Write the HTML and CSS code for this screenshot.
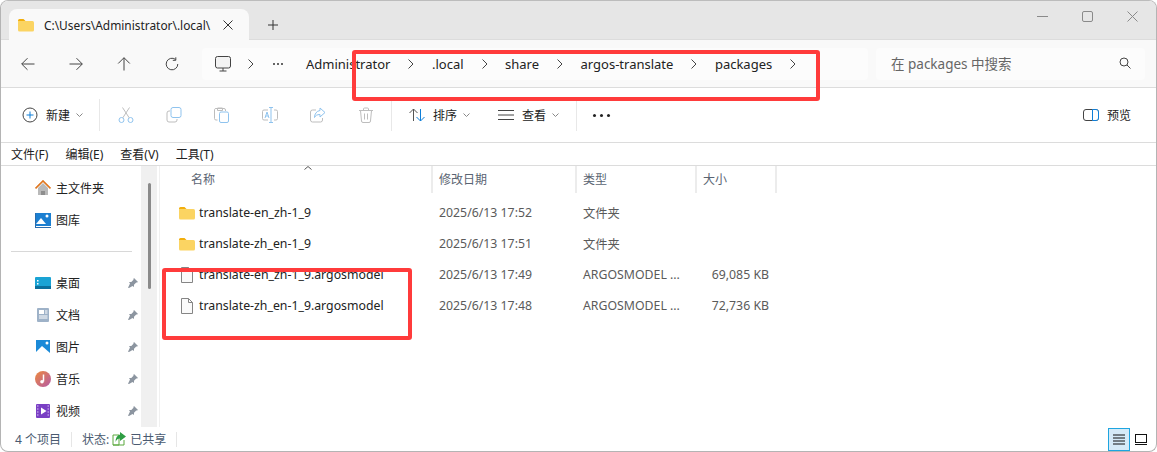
FILE: index.html
```html
<!DOCTYPE html>
<html lang="zh">
<head>
<meta charset="utf-8">
<title>packages</title>
<link rel="stylesheet" href="styles.css">
</head>
<body>
<div class="window">
  <header class="tabbar">
    <div class="tab">
      <svg class="ic16" viewBox="0 0 16 16"><path d="M0 3.500a1.500 1.500 0 0 1 1.500-1.500h4l2 2H0z" fill="#f2ae0c"/><path d="M0 4h14.500a1.500 1.500 0 0 1 1.500 1.500V13a1.500 1.500 0 0 1-1.500 1.500h-13A1.500 1.500 0 0 1 0 13z" fill="#fbd462"/></svg>
      <span class="tab-title">C:\Users\Administrator\.local\</span>
      <svg class="tab-close" viewBox="0 0 10 10"><path d="M.5.5l9 9M9.500.500l-9 9" stroke="#333" fill="none"/></svg>
    </div>
    <svg class="tab-new" viewBox="0 0 10 10"><path d="M5 0v10M0 5h10" stroke="#333" fill="none"/></svg>
    <div class="winctl">
      <svg class="ctl" viewBox="0 0 11 11"><path d="M0 5.500h11" stroke="#8a8a8a" fill="none"/></svg>
      <svg class="ctl" viewBox="0 0 11 11"><rect x=".5" y=".5" width="10" height="10" rx="1.500" stroke="#8a8a8a" fill="none"/></svg>
      <svg class="ctl" viewBox="0 0 11 11"><path d="M.5.5l10 10M10.500.500l-10 10" stroke="#8a8a8a" fill="none"/></svg>
    </div>
  </header>

  <nav class="navbar">
    <div class="navbtns">
      <span class="navbtn"><svg class="ic14" viewBox="0 0 14 14"><path d="M13.500 7H.8M6.500 1.200L.7 7l5.800 5.800" stroke="#444" fill="none"/></svg></span>
      <span class="navbtn"><svg class="ic14" viewBox="0 0 14 14"><path d="M.5 7h12.700M7.500 1.200L13.300 7l-5.800 5.800" stroke="#444" fill="none"/></svg></span>
      <span class="navbtn"><svg class="ic14" viewBox="0 0 14 14"><path d="M7 13.500V.8M1.200 6.500L7 .7l5.800 5.800" stroke="#444" fill="none"/></svg></span>
      <span class="navbtn"><svg class="ic14" viewBox="0 0 14 14"><path d="M12.800 7A5.800 5.800 0 1 1 10.500 2.400M10.800.3v3h-3" stroke="#444" fill="none"/></svg></span>
    </div>
    <div class="address">
      <svg class="pc" viewBox="0 0 16 16"><rect x=".5" y=".5" width="15" height="11.500" rx="2" fill="#f3f3f3" stroke="#444"/><path d="M8 12v3M4.500 15h7" stroke="#444" fill="none"/></svg>
      <svg class="chev first" viewBox="0 0 6 10"><path d="M.5.5L5 5 .5 9.500" stroke="#444" fill="none"/></svg>
      <span class="more"><b></b><b></b><b></b></span>
      <span class="crumb">Administrator</span>
      <svg class="chev" viewBox="0 0 6 10"><path d="M.5.5L5 5 .5 9.500" stroke="#444" fill="none"/></svg>
      <span class="crumb">.local</span>
      <svg class="chev" viewBox="0 0 6 10"><path d="M.5.5L5 5 .5 9.500" stroke="#444" fill="none"/></svg>
      <span class="crumb">share</span>
      <svg class="chev" viewBox="0 0 6 10"><path d="M.5.5L5 5 .5 9.500" stroke="#444" fill="none"/></svg>
      <span class="crumb">argos-translate</span>
      <svg class="chev" viewBox="0 0 6 10"><path d="M.5.5L5 5 .5 9.500" stroke="#444" fill="none"/></svg>
      <span class="crumb">packages</span>
      <svg class="chev" viewBox="0 0 6 10"><path d="M.5.5L5 5 .5 9.500" stroke="#444" fill="none"/></svg>
    </div>
    <div class="search">
      <span>在 packages 中搜索</span>
      <svg class="ic12" viewBox="0 0 12 12"><circle cx="5" cy="5" r="4" stroke="#444" fill="none"/><path d="M8 8l3.500 3.500" stroke="#444" fill="none"/></svg>
    </div>
  </nav>

  <section class="toolbar">
    <div class="tool new">
      <svg class="ic16" viewBox="0 0 16 16"><circle cx="8" cy="8" r="7" stroke="#444" fill="#fff"/><path d="M8 4.500v7M4.500 8h7" stroke="#0f7fd8" fill="none"/></svg>
      <span>新建</span>
      <svg class="caret" viewBox="0 0 7 4"><path d="M.5.5L3.500 3.500 6.500.5" stroke="#888" fill="none"/></svg>
    </div>
    <i class="tsep"></i>
    <div class="tgroup">
      <span class="iconbtn"><svg class="ic16b" viewBox="0 0 16 16"><circle cx="3.500" cy="13" r="2.500" stroke="#8fc3ee" fill="none"/><circle cx="12.500" cy="13" r="2.500" stroke="#8fc3ee" fill="none"/><path d="M4.800 10.800L11.500.5M11.200 10.800L4.500.5" stroke="#bdbdbd" fill="none"/></svg></span>
      <span class="iconbtn"><svg class="ic16b" viewBox="0 0 16 16"><rect x="5" y=".5" width="10" height="10" rx="2" stroke="#8fc3ee" fill="none"/><path d="M4 4H3a2 2 0 0 0-2 2v7a2 2 0 0 0 2 2h6a2 2 0 0 0 2-2v-1" stroke="#bdbdbd" fill="none"/></svg></span>
      <span class="iconbtn"><svg class="ic16b" viewBox="0 0 16 16"><path d="M3.500 13H2a1.500 1.500 0 0 1-1.500-1.500v-9A1.500 1.500 0 0 1 2 1.500h8A1.500 1.500 0 0 1 11.500 3v1M3.500 1h5v2.500h-5z" stroke="#bdbdbd" fill="none"/><rect x="5.500" y="5" width="9" height="10.500" rx="1.500" stroke="#8fc3ee" fill="none"/></svg></span>
      <span class="iconbtn"><svg class="ic16b" viewBox="0 0 16 16"><path d="M6 3H2a1.500 1.500 0 0 0-1.500 1.500v7A1.500 1.500 0 0 0 2 13h4M12 3h2a1.500 1.500 0 0 1 1.500 1.500v7A1.500 1.500 0 0 1 14 13h-2" stroke="#bdbdbd" fill="none"/><path d="M9 .5v15M7 .5h4M7 15.500h4M3 11l2-6 2 6M3.700 9h2.600" stroke="#8fc3ee" fill="none"/></svg></span>
      <span class="iconbtn"><svg class="ic16b" viewBox="0 0 16 16"><path d="M6 3H2.500a2 2 0 0 0-2 2v8a2 2 0 0 0 2 2h8a2 2 0 0 0 2-2v-2" stroke="#bdbdbd" fill="none"/><path d="M10 1l5 4.500L10 10V7.500c-3 0-4.500 1-5.500 3C4.500 7 6.500 4 10 3.500z" stroke="#8fc3ee" fill="none"/></svg></span>
      <span class="iconbtn"><svg class="ic16b" viewBox="0 0 16 16"><path d="M1 3.500h14M5.500 3.500V2a1 1 0 0 1 1-1h3a1 1 0 0 1 1 1v1.500M2.500 3.500l1 10.500a1.500 1.500 0 0 0 1.500 1.500h6a1.500 1.500 0 0 0 1.500-1.500l1-10.500M6.500 6.500v6M9.500 6.500v6" stroke="#bdbdbd" fill="none"/></svg></span>
    </div>
    <i class="tsep"></i>
    <div class="tool sort">
      <svg class="ic16" viewBox="0 0 16 16"><path d="M4.500 14V2M.5 6l4-4 4 4" stroke="#555" fill="none"/><path d="M11.500 2v12M7.500 10l4 4 4-4" stroke="#0f7fd8" fill="none"/></svg>
      <span>排序</span>
      <svg class="caret" viewBox="0 0 7 4"><path d="M.5.5L3.500 3.500 6.500.5" stroke="#888" fill="none"/></svg>
    </div>
    <div class="tool view">
      <svg class="ic16" viewBox="0 0 16 16"><path d="M0 3.500h16M0 8h16M0 12.500h16" stroke="#444" fill="none"/></svg>
      <span>查看</span>
      <svg class="caret" viewBox="0 0 7 4"><path d="M.5.5L3.500 3.500 6.500.5" stroke="#888" fill="none"/></svg>
    </div>
    <i class="tsep last"></i>
    <span class="dots"><b></b><b></b><b></b></span>
    <div class="tool preview">
      <svg class="ic16" viewBox="0 0 16 12"><rect x=".5" y=".5" width="15" height="11" rx="2.500" stroke="#444" fill="none"/><path d="M9.500.5h3.500a2.500 2.500 0 0 1 2.500 2.500v6a2.500 2.500 0 0 1-2.500 2.500H9.500z" stroke="#0f7fd8" fill="#fff"/></svg>
      <span>预览</span>
    </div>
  </section>

  <div class="menubar">
    <span>文件(F)</span><span>编辑(E)</span><span>查看(V)</span><span>工具(T)</span>
  </div>

  <main class="main">
    <aside class="sidebar">
      <div class="side-list">
        <div class="side-item">
          <svg class="ic16" viewBox="0 0 16 16"><path d="M3 8v7h10V8L8 3z" fill="#b9b9b9"/><path d="M6 15v-4h4v4z" fill="#8e8e8e"/><path d="M.5 8.500L8 1l7.500 7.500" stroke="#e0761f" stroke-width="1.700" fill="none"/></svg>
          <span>主文件夹</span>
        </div>
        <div class="side-item">
          <svg class="ic16" viewBox="0 0 16 16"><rect width="15" height="13" x="1" y="1" fill="#1b7fd1"/><path d="M1 12l5-6 5 6z" fill="#fff"/><circle cx="12" cy="4" r="1.500" fill="#fff"/><path d="M0 1h1v14h15v1H0z" fill="#2a6cad"/></svg>
          <span>图库</span>
        </div>
        <hr class="side-sep">
        <div class="side-item pinned">
          <svg class="ic16" viewBox="0 0 16 16"><rect y="2" width="16" height="12" rx="1" fill="#1aa3d4"/><rect y="11" width="16" height="3" fill="#0a6f9c"/><path d="M2 5h1.500v1.500H2zM2 8h1.500v1.500H2z" fill="#fff"/></svg>
          <span>桌面</span>
          <svg class="pin" viewBox="0 0 10 10"><path d="M6 0l4 4-1 .6-.8-.1L6 6.800 6 9 4.500 8 1 10 0 9.700 2 5.500 1 4h2.300l2.200-2.200L5.400 1z" fill="#8c95a0"/></svg>
        </div>
        <div class="side-item pinned">
          <svg class="ic16" viewBox="0 0 16 16"><rect x="2" y="1" width="12" height="14" rx="1" fill="#9eb2c8"/><rect x="4" y="3" width="5" height="4" fill="#fff"/><path d="M10 4h2.500M10 6h2.500M4 9h8.500M4 11h8.500" stroke="#fff" fill="none"/></svg>
          <span>文档</span>
          <svg class="pin" viewBox="0 0 10 10"><path d="M6 0l4 4-1 .6-.8-.1L6 6.800 6 9 4.500 8 1 10 0 9.700 2 5.500 1 4h2.300l2.200-2.200L5.400 1z" fill="#8c95a0"/></svg>
        </div>
        <div class="side-item pinned">
          <svg class="ic16" viewBox="0 0 16 16"><rect x="1" y="1" width="14" height="14" fill="#1b8ad8"/><path d="M1 13l6-6 8 7v1H1z" fill="#fff"/><circle cx="12" cy="4" r="1.500" fill="#fff"/></svg>
          <span>图片</span>
          <svg class="pin" viewBox="0 0 10 10"><path d="M6 0l4 4-1 .6-.8-.1L6 6.800 6 9 4.500 8 1 10 0 9.700 2 5.500 1 4h2.300l2.200-2.200L5.400 1z" fill="#8c95a0"/></svg>
        </div>
        <div class="side-item pinned">
          <svg class="ic16" viewBox="0 0 16 16"><defs><linearGradient id="mus" x1="0" y1="0" x2="1" y2="1"><stop offset="0" stop-color="#ee8a3c"/><stop offset="1" stop-color="#b45aa8"/></linearGradient></defs><circle cx="8" cy="8" r="8" fill="url(#mus)"/><path d="M8.500 3.500v7" stroke="#fff" stroke-width="1.500" fill="none"/><circle cx="7" cy="10.700" r="1.800" fill="#fff"/></svg>
          <span>音乐</span>
          <svg class="pin" viewBox="0 0 10 10"><path d="M6 0l4 4-1 .6-.8-.1L6 6.800 6 9 4.500 8 1 10 0 9.700 2 5.500 1 4h2.300l2.200-2.200L5.400 1z" fill="#8c95a0"/></svg>
        </div>
        <div class="side-item pinned">
          <svg class="ic16" viewBox="0 0 16 16"><rect x="1" y="1" width="14" height="14" rx="1" fill="#7a3fc4"/><path d="M6 4.500v7l5.500-3.500z" fill="#fff"/><path d="M2 3h1.500M2 6h1.500M2 9h1.500M2 12h1.500M12.500 3H14M12.500 6H14M12.500 9H14M12.500 12H14" stroke="#d8c0f5" fill="none"/></svg>
          <span>视频</span>
          <svg class="pin" viewBox="0 0 10 10"><path d="M6 0l4 4-1 .6-.8-.1L6 6.800 6 9 4.500 8 1 10 0 9.700 2 5.500 1 4h2.300l2.200-2.200L5.400 1z" fill="#8c95a0"/></svg>
        </div>
      </div>
      <div class="scrolltrack"><div class="scrollthumb"></div></div>
    </aside>
    <section class="files">
      <div class="colhead">
        <span class="sort-arrow"><svg viewBox="0 0 8 4"><path d="M.5 3.500L4 .5l3.500 3" stroke="#555" fill="none"/></svg></span>
        <div class="c-name">名称</div>
        <div class="c-date">修改日期</div>
        <div class="c-type">类型</div>
        <div class="c-size">大小</div>
      </div>
      <div class="row">
        <div class="name"><svg class="ic16" viewBox="0 0 16 16"><path d="M0 3.500a1.500 1.500 0 0 1 1.500-1.500h4l2 2H0z" fill="#f2ae0c"/><path d="M0 4h14.500a1.500 1.500 0 0 1 1.500 1.500V13a1.500 1.500 0 0 1-1.500 1.500h-13A1.500 1.500 0 0 1 0 13z" fill="#fbd462"/></svg>translate-en_zh-1_9</div>
        <div class="date">2025/6/13 17:52</div><div class="type">文件夹</div><div class="size"></div>
      </div>
      <div class="row">
        <div class="name"><svg class="ic16" viewBox="0 0 16 16"><path d="M0 3.500a1.500 1.500 0 0 1 1.500-1.500h4l2 2H0z" fill="#f2ae0c"/><path d="M0 4h14.500a1.500 1.500 0 0 1 1.500 1.500V13a1.500 1.500 0 0 1-1.500 1.500h-13A1.500 1.500 0 0 1 0 13z" fill="#fbd462"/></svg>translate-zh_en-1_9</div>
        <div class="date">2025/6/13 17:51</div><div class="type">文件夹</div><div class="size"></div>
      </div>
      <div class="row">
        <div class="name"><svg class="ic16" viewBox="0 0 16 16"><path d="M2.500.5h7l4 4v11h-11z" fill="#fafafa" stroke="#858585"/><path d="M9.500.5v4h4" fill="none" stroke="#858585"/></svg>translate-en_zh-1_9.argosmodel</div>
        <div class="date">2025/6/13 17:49</div><div class="type">ARGOSMODEL ...</div><div class="size">69,085 KB</div>
      </div>
      <div class="row">
        <div class="name"><svg class="ic16" viewBox="0 0 16 16"><path d="M2.500.5h7l4 4v11h-11z" fill="#fafafa" stroke="#858585"/><path d="M9.500.5v4h4" fill="none" stroke="#858585"/></svg>translate-zh_en-1_9.argosmodel</div>
        <div class="date">2025/6/13 17:48</div><div class="type">ARGOSMODEL ...</div><div class="size">72,736 KB</div>
      </div>
    </section>
  </main>

  <footer class="statusbar">
    <span>4 个项目</span><i class="ssep"></i>
    <span class="state">状态:</span>
    <svg class="share" viewBox="0 0 14 14"><path d="M1 3h6v10H1z" fill="#fff" stroke="#5aa83c"/><path d="M1 13h11V8" fill="none" stroke="#5aa83c"/><path d="M8 0l6 4.500L8 9V6.500C6 6.500 4.500 7.500 3.500 10 3.500 6 5 3.200 8 2.500z" fill="#2f9e44"/></svg>
    <span>已共享</span><i class="ssep"></i>
    <div class="views">
      <span class="vbtn active"><svg viewBox="0 0 12 10"><path d="M0 .5h12M0 3.500h12M0 6.500h12M0 9.500h12" stroke="#111" fill="none"/></svg></span>
      <span class="vbtn"><svg viewBox="0 0 12 11"><rect x=".5" y=".5" width="11" height="8" fill="#fff" stroke="#111"/><path d="M0 10.500h12" stroke="#111" fill="none"/></svg></span>
    </div>
  </footer>

  <div class="mark mark-path"></div>
  <div class="mark mark-files"></div>
</div>
</body>
</html>
```
FILE: styles.css
```css
* { box-sizing: border-box; }
html, body { margin: 0; height: 100%; background: #fff; }
body { width: 1157px; height: 452px; overflow: hidden; font-family: "Noto Sans", "Noto Sans CJK SC", sans-serif; font-size: 12px; color: #222; }
svg { display: block; flex: none; }

.window { position: relative; width: 1157px; height: 452px; border: 1px solid #b4b4b4; border-top-color: #bcbcbc; border-radius: 8px; overflow: hidden; background: #fff; display: flex; flex-direction: column; }

.tabbar { height: 39px; flex: none; background: #e6e6e6; display: flex; align-items: flex-end; padding-left: 8px; border-bottom: 1px solid #dcdcdc; }
.tab { width: 240px; height: 31px; margin-bottom: -1px; background: #f9f9f9; border-radius: 8px 8px 0 0; display: flex; align-items: center; padding-left: 9px; }
.tab .ic16 { margin-right: 10px; }
.tab-title { flex: none; white-space: nowrap; font-size: 11.900px; color: #222; }
.tab-close { width: 10px; height: 10px; margin-left: auto; margin-right: 16px; }
.tab-new { width: 10px; height: 10px; margin: 0 0 9px 19px; }
.winctl { margin-left: auto; display: flex; align-self: flex-start; gap: 34px; padding: 10px 18px 0 0; }
.ctl { width: 11px; height: 11px; }

.ic16 { width: 16px; height: 16px; }
.ic16b { width: 16px; height: 16px; }
.ic14 { width: 14px; height: 14px; }
.ic12 { width: 12px; height: 12px; }

.navbar { height: 48px; flex: none; background: #f9f9f9; border-bottom: 1px solid #dcdcdc; display: flex; align-items: center; padding: 0 11px 0 3px; }
.navbtns { display: flex; width: 198px; flex: none; }
.navbtn { width: 48px; display: flex; justify-content: center; }
.address { width: 666px; height: 32px; background: #fcfcfc; border-radius: 4px; display: flex; align-items: center; padding-left: 13px; font-size: 13px; color: #222; white-space: nowrap; }
.pc { width: 16px; height: 16px; margin-right: 17px; }
.chev { width: 6px; height: 10px; margin: 0 17.500px 0 18px; }
.chev.first { margin: 0 19px 0 0; }
.more { display: flex; gap: 2px; width: 20px; margin-right: 13px; }
.more b { width: 2px; height: 2px; background: #333; border-radius: 50%; }
.search { width: 269px; height: 32px; margin-left: 8px; background: #fcfcfc; border-radius: 4px; display: flex; align-items: center; justify-content: space-between; padding: 0 14px 1px 15px; font-size: 13.500px; color: #666; }

.toolbar { height: 55px; flex: none; border-bottom: 1px solid #dcdcdc; display: flex; align-items: center; padding-left: 21px; }
.tool { display: flex; align-items: center; }
.tool span { font-size: 12px; margin-left: 8px; }
.caret { width: 7px; height: 4px; margin-left: 6px; }
.tool.new { width: 77px; }
.tsep { width: 1px; height: 32px; background: #e8e8e8; flex: none; }
.tgroup { display: flex; margin-left: 2px; margin-right: 1px; }
.iconbtn { width: 48px; display: flex; justify-content: center; }
.tool.sort { margin-left: 17px; }
.tool.view { margin-left: 28px; }
.tsep.last { margin-left: 17px; }
.dots { display: flex; gap: 4px; margin-left: 16px; }
.dots b { width: 3px; height: 3px; border-radius: 50%; background: #222; }
.tool.preview { margin-left: auto; padding-right: 25px; }

.menubar { height: 23px; flex: none; border-bottom: 1px solid #dcdcdc; display: flex; align-items: center; padding-left: 10px; gap: 17px; font-size: 12px; color: #222; }

.main { flex: 1; min-height: 0; display: flex; overflow: hidden; }
.sidebar { width: 159px; flex: none; display: flex; border-right: 1px solid #f0f0f0; }
.side-list { width: 140px; flex: none; padding-top: 6px; }
.side-item { height: 32px; display: flex; align-items: center; padding-left: 34px; font-size: 12px; color: #222; }
.side-item span { margin-left: 5px; }
.side-sep { height: 1px; margin: 15px 9px 15px 10px; border: 0; background: #d8d8d8; }
.pin { width: 10px; height: 10px; margin-left: auto; margin-right: 3px; }
.scrolltrack { width: 16px; background: #f0f0f0; flex: none; padding: 17px 0 0 7px; }
.scrollthumb { width: 3px; height: 106px; background: #8a8a8a; border-radius: 2px; }

.files { flex: 1; position: relative; }
.colhead { height: 27px; display: flex; position: relative; font-size: 12px; color: #5a6472; }
.colhead > div { padding-left: 6px; height: 27px; display: flex; align-items: center; border-right: 2px solid #ececec; padding-bottom: 1px; }
.sort-arrow { position: absolute; left: 144px; top: 0; width: 8px; height: 4px; }
.c-name { width: 273px; padding-left: 31px !important; }
.c-date { width: 144px; }
.c-type { width: 120px; }
.c-size { width: 80px; }
.row { height: 31px; display: flex; align-items: center; font-size: 12.300px; color: #5a5a5a; white-space: nowrap; }
.colhead + .row { margin-top: 4px; }
.name { width: 273px; display: flex; align-items: center; gap: 4px; padding-left: 19px; color: #222; }
.date { width: 144px; padding-left: 6px; }
.type { width: 120px; padding-left: 6px; }
.size { width: 80px; text-align: right; padding-right: 8px; }

.statusbar { height: 24px; flex: none; display: flex; align-items: center; padding-left: 14px; font-size: 12px; color: #4a5a70; position: relative; }
.ssep { width: 1px; height: 15px; background: #e6e6e6; margin: 0 10px; }
.state { margin-right: 3px; }
.share { width: 14px; height: 14px; margin-right: 4px; }
.views { position: absolute; right: 5px; bottom: 0; display: flex; }
.vbtn { width: 21px; height: 23px; display: flex; align-items: center; justify-content: center; }
.vbtn svg { width: 12px; height: 11px; }
.vbtn.active { width: 22px; background: #d5eaf7; border: 1px solid #1ea5e0; }

.mark { position: absolute; border: 4px solid #ff3b3b; border-radius: 3px; pointer-events: none; }
.mark-path { left: 351px; top: 49px; width: 468px; height: 51px; }
.mark-files { left: 161px; top: 267px; width: 250px; height: 72px; }
```
